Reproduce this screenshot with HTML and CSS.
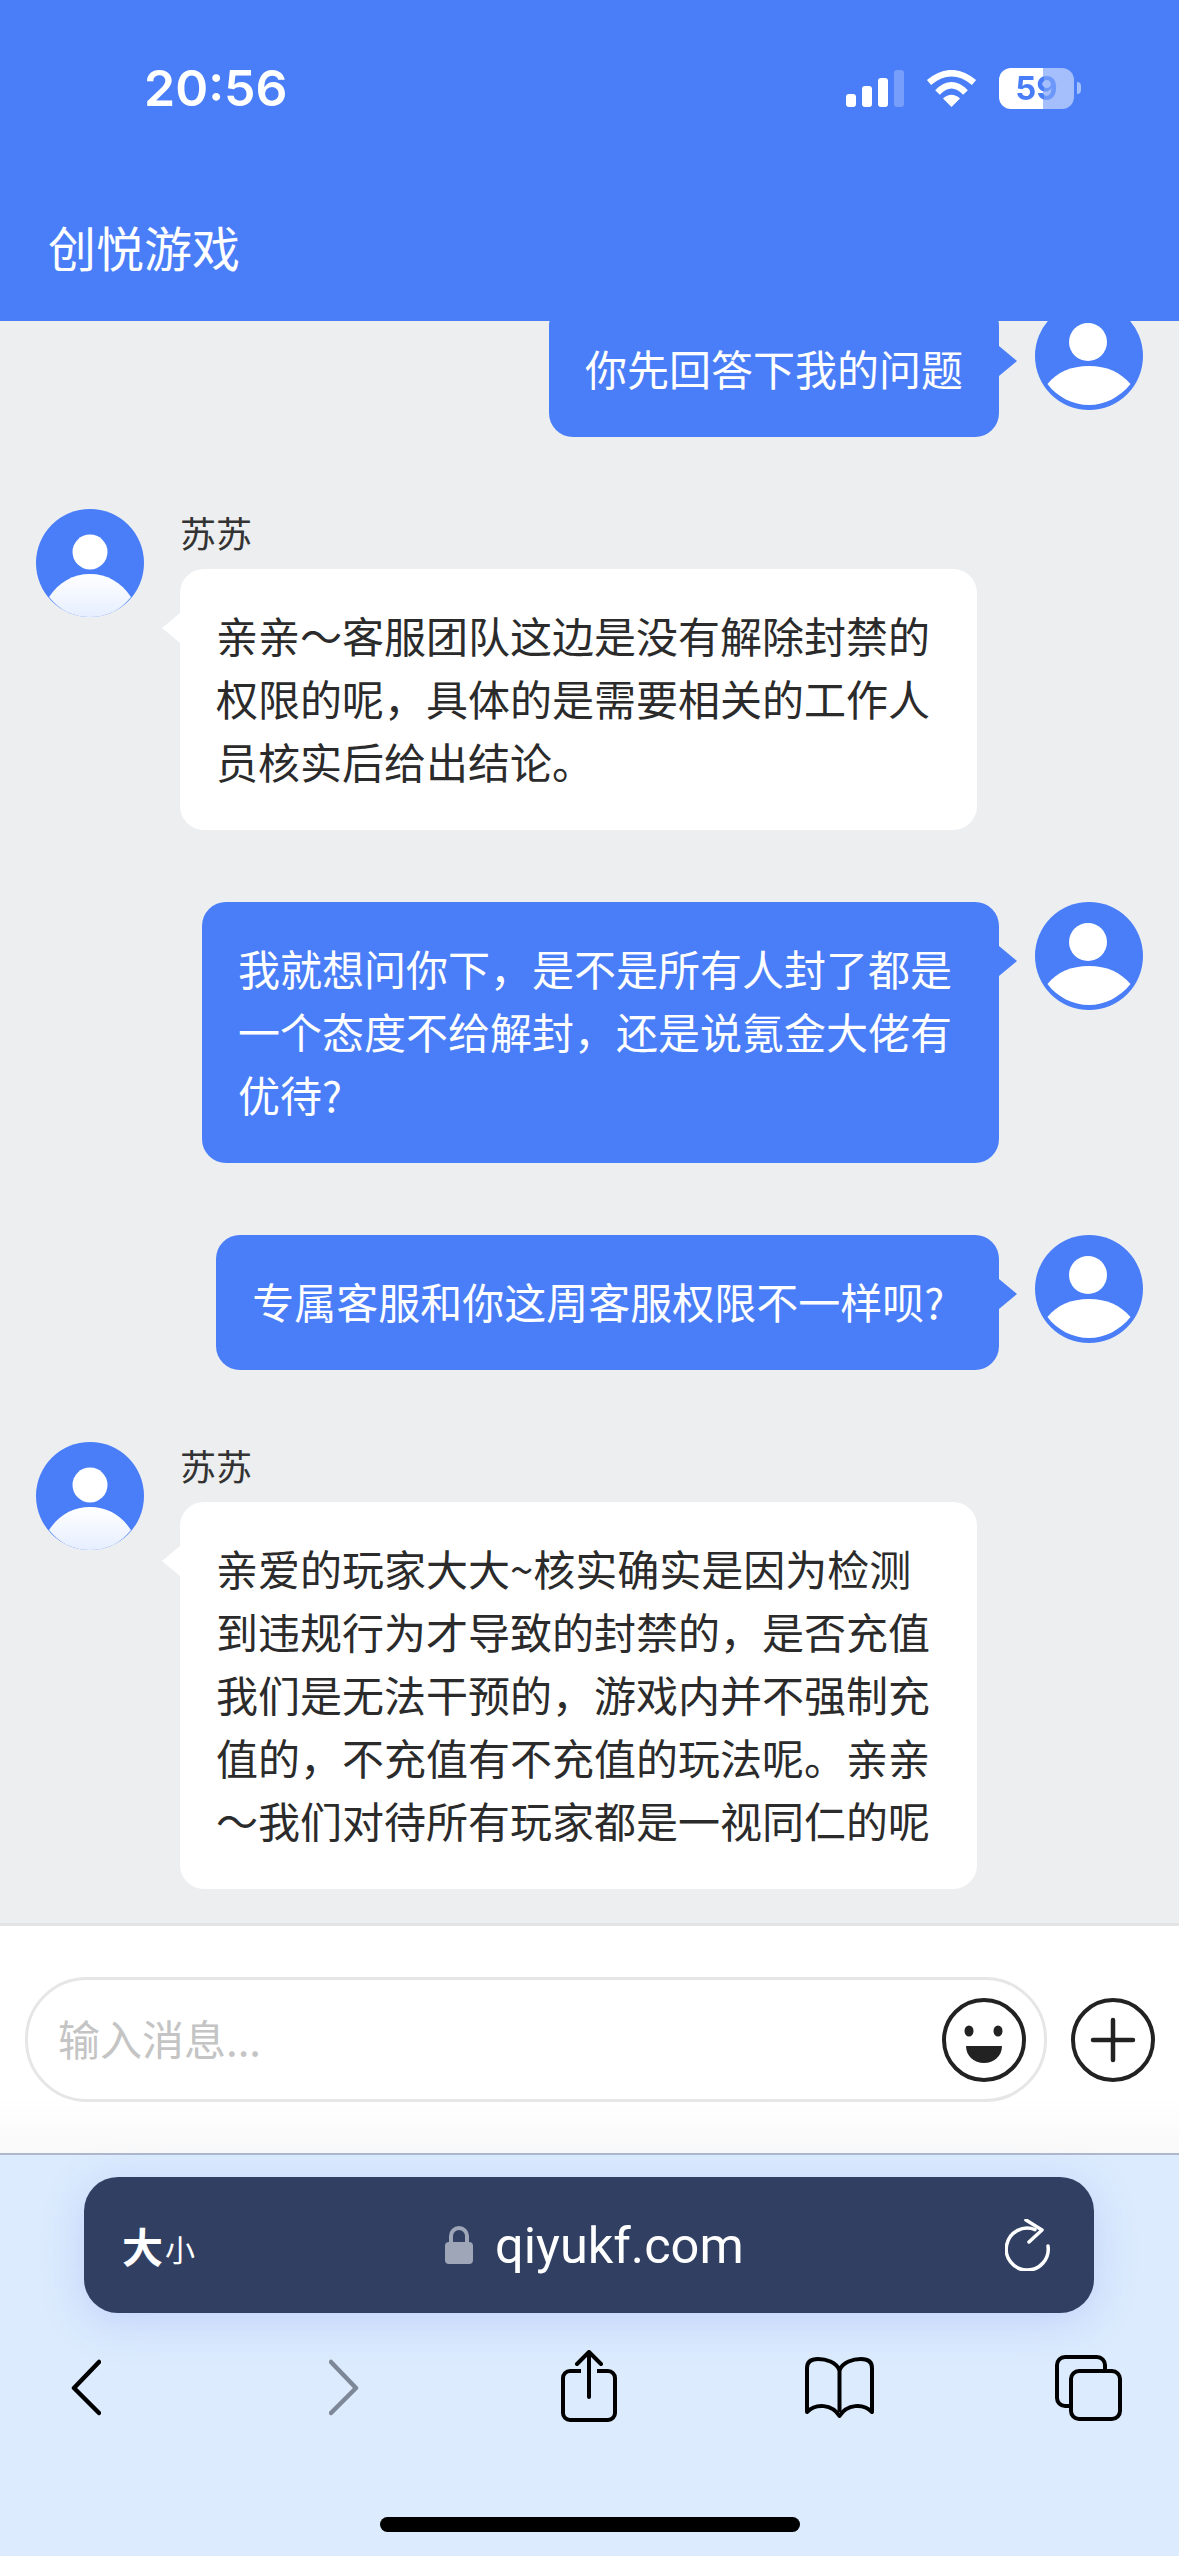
FILE: index.html
```html
<!DOCTYPE html>
<html lang="zh-CN">

<head>
    <meta charset="UTF-8">
    <meta name="viewport" content="width=device-width, initial-scale=1.0">
    <title>创悦游戏</title>
    <link rel="stylesheet" href="styles.css">
</head>

<body>
    <div class="page">
        <div class="header">
            <div class="status">
                <span class="time">20:56</span>
                <div class="status_icons">
                    <svg class="signal" width="58" height="37" viewBox="0 0 58 37">
                        <rect x="0" y="24" width="10" height="13" rx="3" fill="#fff" />
                        <rect x="16" y="16" width="10" height="21" rx="3" fill="#fff" />
                        <rect x="32" y="8" width="10" height="29" rx="3" fill="#fff" />
                        <rect x="48" y="0" width="10" height="37" rx="3" fill="#fff" opacity="0.25" />
                    </svg>
                    <svg class="wifi" width="51" height="37" viewBox="0 0 51 37">
                        <path d="M3 12.5 Q25.5 -6 48 12.5" fill="none" stroke="#fff" stroke-width="6.5" />
                        <path d="M11.5 22.5 Q25.5 8 39.5 22.5" fill="none" stroke="#fff" stroke-width="6.5" />
                        <path d="M25.5 37 L17 28.5 Q25.5 21 34 28.5 Z" fill="#fff" />
                    </svg>
                    <div class="battery_wrap">
                        <div class="battery"><span>59</span></div>
                        <i class="battery_nub"></i>
                    </div>
                </div>
            </div>
            <div class="title">创悦游戏</div>
        </div>

        <div class="chat">
            <div class="msg msg_me">
                <div class="bubble">你先回答下我的问题</div>
                <svg class="avatar" viewBox="0 0 108 108">
                    <circle cx="54" cy="54" r="54" fill="#497ef8" />
                    <circle cx="53" cy="40" r="19" fill="#fff" />
                    <path d="M12.5 82 C22 70 36 64 54 64 C72 64 85 70 95.5 82 C85 95 70 103 54 103 C38 103 22 95 12.5 82Z" fill="#fff" />
                </svg>
            </div>

            <div class="msg msg_kf">
                <svg class="avatar" viewBox="0 0 108 108">
                    <defs>
                        <linearGradient id="bodyfade" x1="0" y1="0" x2="0" y2="1">
                            <stop offset="0" stop-color="#ffffff" />
                            <stop offset="1" stop-color="#e6eeff" />
                        </linearGradient>
                    </defs>
                    <circle cx="54" cy="54" r="54" fill="#497ef8" />
                    <circle cx="54" cy="43" r="17.5" fill="#fff" />
                    <path d="M13 88 C23 73 37 65 54 65 C71 65 85 73 95 88 C85 101 71 108 54 108 C37 108 23 101 13 88Z" fill="url(#bodyfade)" />
                </svg>
                <div class="kf_col">
                    <div class="name">苏苏</div>
                    <div class="bubble">亲亲～客服团队这边是没有解除封禁的权限的呢，具体的是需要相关的工作人员核实后给出结论。</div>
                </div>
            </div>

            <div class="msg msg_me">
                <div class="bubble">我就想问你下，是不是所有人封了都是一个态度不给解封，还是说氪金大佬有优待?</div>
                <svg class="avatar" viewBox="0 0 108 108">
                    <circle cx="54" cy="54" r="54" fill="#497ef8" />
                    <circle cx="53" cy="40" r="19" fill="#fff" />
                    <path d="M12.5 82 C22 70 36 64 54 64 C72 64 85 70 95.5 82 C85 95 70 103 54 103 C38 103 22 95 12.5 82Z" fill="#fff" />
                </svg>
            </div>

            <div class="msg msg_me">
                <div class="bubble">专属客服和你这周客服权限不一样呗?&nbsp;&nbsp;</div>
                <svg class="avatar" viewBox="0 0 108 108">
                    <circle cx="54" cy="54" r="54" fill="#497ef8" />
                    <circle cx="53" cy="40" r="19" fill="#fff" />
                    <path d="M12.5 82 C22 70 36 64 54 64 C72 64 85 70 95.5 82 C85 95 70 103 54 103 C38 103 22 95 12.5 82Z" fill="#fff" />
                </svg>
            </div>

            <div class="msg msg_kf">
                <svg class="avatar" viewBox="0 0 108 108">
                    <circle cx="54" cy="54" r="54" fill="#497ef8" />
                    <circle cx="54" cy="43" r="17.5" fill="#fff" />
                    <path d="M13 88 C23 73 37 65 54 65 C71 65 85 73 95 88 C85 101 71 108 54 108 C37 108 23 101 13 88Z" fill="url(#bodyfade)" />
                </svg>
                <div class="kf_col">
                    <div class="name">苏苏</div>
                    <div class="bubble">亲爱的玩家大大~核实确实是因为检测到违规行为才导致的封禁的，是否充值我们是无法干预的，游戏内并不强制充值的，不充值有不充值的玩法呢。亲亲<br>～我们对待所有玩家都是一视同仁的呢</div>
                </div>
            </div>
        </div>

        <div class="inputbar">
            <div class="inputbox">
                <span class="placeholder">输入消息...</span>
                <svg width="84" height="84" viewBox="0 0 84 84">
                    <circle cx="42" cy="42" r="40" fill="none" stroke="#222" stroke-width="4" />
                    <ellipse cx="27" cy="33" rx="4.5" ry="5.5" fill="#222" />
                    <ellipse cx="56" cy="33" rx="4.5" ry="5.5" fill="#222" />
                    <path d="M24 48 H60 C60 58 52 65 42 65 C32 65 24 58 24 48Z" fill="#222" />
                </svg>
            </div>
            <svg class="plus" width="84" height="84" viewBox="0 0 84 84">
                <circle cx="42" cy="42" r="40" fill="none" stroke="#222" stroke-width="4" />
                <path d="M42 22 V62 M22 42 H62" fill="none" stroke="#222" stroke-width="4.5" stroke-linecap="round" />
            </svg>
        </div>

        <div class="safari">
            <div class="addressbar">
                <div class="textsize"><span class="big">大</span><span class="small">小</span></div>
                <div class="address">
                    <svg width="28" height="38" viewBox="0 0 28 38">
                        <path d="M6 18 V10 a8 8 0 0 1 16 0 V18" fill="none" stroke="#9ea6b8" stroke-width="4" />
                        <rect x="0" y="16" width="28" height="22" rx="4" fill="#9ea6b8" />
                    </svg>
                    <span class="url">qiyukf.com</span>
                </div>
                <svg class="reload" width="46" height="52" viewBox="0 0 46 52">
                    <path d="M30 10.6 A21 21 0 1 0 43 27" fill="none" stroke="#fff" stroke-width="3.5" stroke-linecap="round" />
                    <path d="M21 1 L37 11 L24 23" fill="none" stroke="#fff" stroke-width="3.5" stroke-linecap="round" stroke-linejoin="round" />
                </svg>
            </div>
            <div class="toolbar">
                <svg width="30" height="72" viewBox="0 0 30 72">
                    <path d="M28 12 L3 38 L28 63" fill="none" stroke="#000" stroke-width="4.5" stroke-linecap="round" stroke-linejoin="round" />
                </svg>
                <svg width="30" height="72" viewBox="0 0 30 72">
                    <path d="M2 12 L27 38 L2 63" fill="none" stroke="#7d8797" stroke-width="4.5" stroke-linecap="round" stroke-linejoin="round" />
                </svg>
                <svg width="56" height="72" viewBox="0 0 56 72">
                    <path d="M20 21 H9 a7 7 0 0 0 -7 7 V63 a7 7 0 0 0 7 7 H47 a7 7 0 0 0 7 -7 V28 a7 7 0 0 0 -7 -7 H36" fill="none" stroke="#000" stroke-width="4" />
                    <path d="M28 47 V3 M16 14 L28 2 L40 14" fill="none" stroke="#000" stroke-width="4" stroke-linecap="round" stroke-linejoin="round" />
                </svg>
                <svg width="71" height="72" viewBox="0 0 71 72">
                    <path d="M35.5 20 V62" fill="none" stroke="#000" stroke-width="4" />
                    <path d="M35.5 20 C32 12 22 9 14 9 C7 9 3 12 3 18 V62 C12 53 28 54 35.5 66 C43 54 59 53 68 62 V18 C68 12 64 9 57 9 C49 9 39 12 35.5 20 Z" fill="none" stroke="#000" stroke-width="4" stroke-linejoin="round" />
                </svg>
                <svg width="67" height="72" viewBox="0 0 67 72">
                    <path d="M15 56 H10 a8 8 0 0 1 -8 -8 V15 a8 8 0 0 1 8 -8 H42 a8 8 0 0 1 8 8 V20" fill="none" stroke="#000" stroke-width="4" />
                    <rect x="16" y="21" width="49" height="48" rx="8" fill="none" stroke="#000" stroke-width="4" />
                </svg>
            </div>
            <div class="homebar"></div>
        </div>
    </div>
</body>

</html>
```

FILE: styles.css
```css
* {
    box-sizing: border-box;
}

body {
    margin: 0;
    font-family: "Noto Sans CJK SC", "Noto Sans", sans-serif;
}

svg {
    display: block;
    flex: none;
}

.page {
    width: 1179px;
    height: 2556px;
    display: flex;
    flex-direction: column;
    overflow: hidden;
    background-color: #edeef0;
}

/* header */
.header {
    height: 321px;
    flex: none;
    background-color: #497ef8;
    color: #fff;
    padding-top: 64px;
}

.status {
    display: flex;
    justify-content: space-between;
    align-items: center;
    height: 48px;
    padding: 0 98px 0 144px;
}

.time {
    font-family: Inter, "Liberation Sans", sans-serif;
    font-size: 50px;
    font-weight: 600;
    line-height: 48px;
}

.status_icons {
    display: flex;
    align-items: center;
    gap: 22px;
}

.battery_wrap {
    display: flex;
    align-items: center;
    gap: 3px;
}

.battery {
    width: 75px;
    height: 41px;
    border-radius: 12px;
    background: linear-gradient(90deg, #fff 59%, rgba(255, 255, 255, 0.5) 59%);
    display: flex;
    align-items: center;
    justify-content: center;
}

.battery span {
    font-family: Inter, "Liberation Sans", sans-serif;
    font-size: 33px;
    font-weight: 700;
    line-height: 41px;
    color: transparent;
    background: linear-gradient(90deg, #497ef8 67%, #6d97f9 67%);
    -webkit-background-clip: text;
    background-clip: text;
}

.battery_nub {
    width: 4px;
    height: 12px;
    border-radius: 0 6px 6px 0;
    background-color: rgba(255, 255, 255, 0.5);
}

.title {
    margin-top: 102px;
    padding-left: 48px;
    font-size: 48px;
    line-height: 64px;
}

/* chat list */
.chat {
    height: 1602px;
    flex: none;
    overflow: hidden;
    display: flex;
    flex-direction: column;
    justify-content: flex-end;
    gap: 72px;
    padding: 0 36px 34px;
}

.msg {
    display: flex;
    align-items: flex-start;
    gap: 36px;
    flex: none;
}

.msg_me {
    justify-content: flex-end;
}

.avatar {
    width: 108px;
    height: 108px;
}

.name {
    font-size: 36px;
    line-height: 46px;
    margin-bottom: 14px;
    color: #333;
}

.bubble {
    position: relative;
    max-width: 797px;
    padding: 34px 36px 38px;
    border-radius: 24px;
    font-size: 42px;
    line-height: 63px;
}

.bubble::after {
    content: "";
    position: absolute;
    top: 44px;
    border-top: 15px solid transparent;
    border-bottom: 15px solid transparent;
}

.msg_me .bubble {
    background-color: #497ef8;
    color: #fff;
}

.msg_me .bubble::after {
    left: 100%;
    border-left: 18px solid #497ef8;
}

.msg_kf .bubble {
    background-color: #fff;
    color: #2b2b2b;
}

.msg_kf .bubble::after {
    right: 100%;
    border-right: 18px solid #fff;
}

/* input */
.inputbar {
    height: 230px;
    flex: none;
    border-top: 3px solid #e4e4e4;
    background: linear-gradient(180deg, #fff 75%, #f9f9f9 100%);
    display: flex;
    align-items: flex-start;
    padding: 51px 0 0 25px;
}

.inputbox {
    width: 1022px;
    height: 125px;
    border: 3px solid #e6e6e6;
    border-radius: 62px;
    display: flex;
    align-items: center;
    justify-content: space-between;
    padding: 0 18px 0 30px;
}

.placeholder {
    font-size: 42px;
    line-height: 60px;
    margin-top: -3px;
    color: #c4c4c4;
}

.plus {
    margin: 21px 0 0 24px;
}

/* safari */
.safari {
    flex: 1;
    border-top: 2px solid #aeb8cc;
    background-color: #dcebfd;
    padding-top: 22px;
}

.addressbar {
    width: 1010px;
    height: 136px;
    margin-left: 84px;
    border-radius: 34px;
    background-color: #314062;
    box-shadow: 0 8px 44px rgba(90, 125, 245, 0.22);
    color: #fff;
    display: flex;
    align-items: center;
    padding: 0 43px 0 38px;
}

.textsize {
    display: flex;
    align-items: flex-end;
    width: 75px;
    font-weight: 700;
}

.big {
    font-size: 41px;
    line-height: 46px;
}

.small {
    font-size: 30px;
    line-height: 40px;
    margin-left: 2px;
    font-weight: 400;
}

.address {
    display: flex;
    align-items: center;
    gap: 22px;
    margin-left: 248px;
}

.url {
    font-family: Roboto, "Liberation Sans", sans-serif;
    font-size: 50.5px;
    line-height: 60px;
    padding-top: 2px;
}

.reload {
    margin-left: auto;
}

.toolbar {
    display: grid;
    grid-template-columns: 258px 232px 243px 251px auto;
    padding-left: 71px;
    margin-top: 37px;
    height: 72px;
}

.homebar {
    width: 420px;
    height: 15px;
    margin: 95px 0 0 380px;
    border-radius: 8px;
    background-color: #000;
}
```
